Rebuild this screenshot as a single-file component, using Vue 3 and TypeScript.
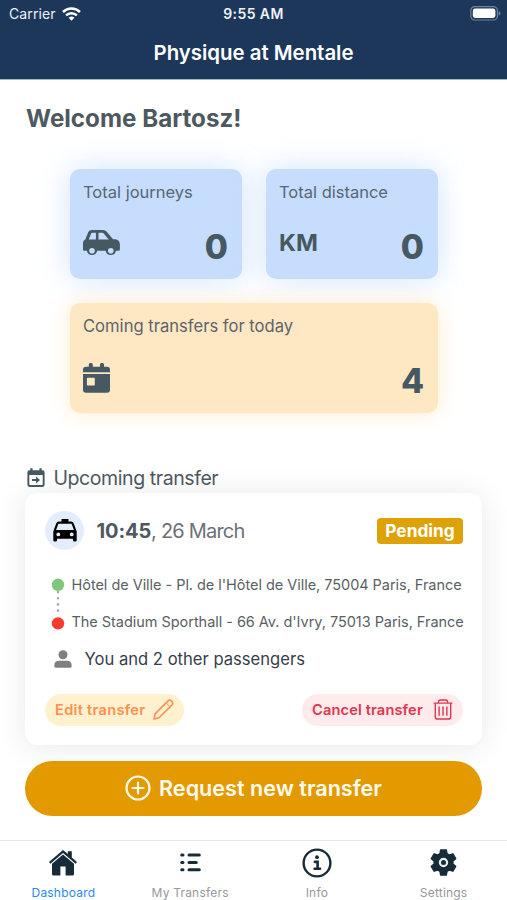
<script setup lang="ts">
interface Stat {
  label: string
  value: number
  kind: 'car' | 'km' | 'calendar'
}

interface Tab {
  label: string
  icon: 'home' | 'list' | 'info' | 'gear'
  active?: boolean
}

const stats: Stat[] = [
  { label: 'Total journeys', value: 0, kind: 'car' },
  { label: 'Total distance', value: 0, kind: 'km' },
  { label: 'Coming transfers for today', value: 4, kind: 'calendar' },
]

const tabs: Tab[] = [
  { label: 'Dashboard', icon: 'home', active: true },
  { label: 'My Transfers', icon: 'list' },
  { label: 'Info', icon: 'info' },
  { label: 'Settings', icon: 'gear' },
]
</script>

<template>
  <div class="screen">
    <header class="top">
      <div class="status">
        <div class="carrier">
          <span>Carrier</span>
          <svg width="19" height="14" viewBox="0 0 19 14" fill="none" stroke="#fff" stroke-width="2.5">
            <path d="M1 5a12.2 12.2 0 0 1 17 0" />
            <path d="M4.1 8.4a7.8 7.8 0 0 1 10.8 0" />
            <path d="M9.5 13.8L6.6 10.8a4.2 4.2 0 0 1 5.8 0z" fill="#fff" stroke="none" />
          </svg>
        </div>
        <div class="clock">9:55 AM</div>
        <div class="battery">
          <svg width="31" height="15" viewBox="0 0 31 15">
            <rect x=".8" y=".6" width="26.6" height="13.4" rx="4" fill="none" stroke="#6f809a" stroke-width="1.2" />
            <rect x="2.8" y="2.6" width="22.6" height="9.4" rx="2.4" fill="#fff" />
            <path d="M28.6 5.2q2 .6 2 2.2t-2 2.2z" fill="#6f809a" />
          </svg>
        </div>
      </div>
      <h1 class="title">Physique at Mentale</h1>
    </header>

    <main class="content">
      <h2 class="welcome">Welcome Bartosz!</h2>

      <section class="stats">
        <div v-for="s in stats" :key="s.label" class="stat" :class="s.kind">
          <div class="stat-label">{{ s.label }}</div>
          <div class="stat-row">
            <svg v-if="s.kind === 'car'" class="car-icon" width="37" height="27" viewBox="0 0 37 27">
              <path fill-rule="evenodd" fill="#465862" d="M8.8 0H20.2Q22.2 0 23.7 1.7L30 9.2H32Q36.9 9.6 36.9 14.5V19.4Q36.9 20.7 35.5 20.7H33A5.3 5.3 0 0 1 22.6 20.7H14.2A5.3 5.3 0 0 1 3.8 20.7H1.2Q0 20.7 0 19.4V13Q0 10.4 2.3 9.5L5.2 2.3Q6.2 0 8.8 0ZM8.3 3.3L5.7 9.5H12.9V2.8H9.1Q8.5 2.8 8.3 3.3ZM15.5 2.8V9.5H25.8L20.7 3.5Q20.1 2.8 19.3 2.8ZM9 17.9A2.8 2.8 0 1 0 9 23.5A2.8 2.8 0 1 0 9 17.9ZM27.8 17.9A2.8 2.8 0 1 0 27.8 23.5A2.8 2.8 0 1 0 27.8 17.9Z" />
            </svg>
            <span v-else-if="s.kind === 'km'" class="unit">KM</span>
            <svg v-else class="cal-icon" width="27" height="30" viewBox="0 0 27 30">
              <path fill-rule="evenodd" fill="#465862" d="M3 3.8H5.8V1.5Q5.8 0 7.3 0H8.3Q9.8 0 9.8 1.5V3.8H17V1.5Q17 0 18.5 0H19.5Q21 0 21 1.5V3.8H24Q27 3.8 27 6.8V9.2H0V6.8Q0 3.8 3 3.8ZM0 11H27V26.8Q27 29.8 24 29.8H3Q0 29.8 0 26.8ZM4.7 14.8Q3.9 14.8 3.9 15.6V21.8Q3.9 22.6 4.7 22.6H11Q11.8 22.6 11.8 21.8V15.6Q11.8 14.8 11 14.8Z" />
            </svg>
            <span class="stat-value">{{ s.value }}</span>
          </div>
        </div>
      </section>

      <div class="section-head">
        <svg width="18" height="20" viewBox="0 0 18 20">
          <path fill-rule="evenodd" fill="#465862" d="M2.5 2.2H3.3V.3H5.6V2.2H12.4V.3H14.7V2.2H15.5Q17.6 2.2 17.6 4.3V16.8Q17.6 18.9 15.5 18.9H2.5Q.4 18.9 .4 16.8V4.3Q.4 2.2 2.5 2.2ZM2.3 7V16.2Q2.3 17 3.1 17H14.9Q15.7 17 15.7 16.2V7Z" />
          <path fill="#465862" d="M5 10.9H9V8.6L13 12L9 15.4V13.1H5Z" />
        </svg>
        <span>Upcoming transfer</span>
      </div>

      <article class="card">
        <div class="card-head">
          <div class="avatar">
            <svg width="24" height="23" viewBox="0 0 24 23">
              <path fill-rule="evenodd" d="M8.5 0H15.5V2.6H18.3Q20.2 2.6 20.8 4.4L23.7 12.5V21.3Q23.7 22.6 22.4 22.6H21.3Q20 22.6 20 21.3V19.8H4V21.3Q4 22.6 2.7 22.6H1.6Q.3 22.6 .3 21.3V12.5L3.2 4.4Q3.8 2.6 5.7 2.6H8.5ZM5.4 4.7L3.1 11H20.9L18.6 4.7ZM5.3 13.5A1.9 1.9 0 1 0 5.3 17.3A1.9 1.9 0 1 0 5.3 13.5ZM18.7 13.5A1.9 1.9 0 1 0 18.7 17.3A1.9 1.9 0 1 0 18.7 13.5Z" />
            </svg>
          </div>
          <div class="when"><strong>10:45</strong>, 26 March</div>
          <span class="badge">Pending</span>
        </div>

        <div class="route">
          <svg class="track" width="14" height="52" viewBox="0 0 14 52">
            <path d="M7 14v24" stroke="#a9a9ad" stroke-width="2.6" stroke-linecap="round" stroke-dasharray=".1 6.1" />
            <circle cx="7" cy="6.8" r="6.2" fill="#80c67b" />
            <circle cx="7" cy="45.4" r="6.2" fill="#fa3a2c" />
          </svg>
          <div class="stops">
            <div class="from">Hôtel de Ville - Pl. de l'Hôtel de Ville, 75004 Paris, France</div>
            <div class="to">The Stadium Sporthall - 66 Av. d'Ivry, 75013 Paris, France</div>
          </div>
        </div>

        <div class="people">
          <svg width="18" height="18" viewBox="0 0 18 18" fill="#7f7f82">
            <circle cx="9" cy="4.7" r="4.5" />
            <path d="M.4 15.2Q.4 10.8 5.2 10.8H12.8Q17.6 10.8 17.6 15.2V16.2Q17.6 17.8 16 17.8H2Q.4 17.8 .4 16.2Z" />
          </svg>
          <span>You and 2 other passengers</span>
        </div>

        <div class="actions">
          <button class="pill edit">
            <span>Edit transfer</span>
            <svg width="21" height="21" viewBox="0 0 21 21" fill="none" stroke="#fb9150" stroke-width="1.6" stroke-linejoin="round">
              <path d="M1 20L2.1 14.9L14.8 2.1Q16.7.2 18.7 2.1Q20.7 4.1 18.8 6.1L6 18.8Z" />
              <path d="M13.1 3.8L17.1 7.8" stroke-width="1" />
            </svg>
          </button>
          <button class="pill cancel">
            <span>Cancel transfer</span>
            <svg width="20" height="21" viewBox="0 0 20 21" fill="none" stroke="#e13650" stroke-width="1.4">
              <path d="M.6 4.1H19.4M2.3 4.1V17.9Q2.3 20 4.4 20H15.6Q17.7 20 17.7 17.9V4.1M5.5 4V2.8Q5.5 1 7.3 1H12.7Q14.5 1 14.5 2.8V4M6.1 7.5V16.7M10 7.5V16.7M13.9 7.5V16.7" />
            </svg>
          </button>
        </div>
      </article>

      <button class="request">
        <svg width="26" height="26" viewBox="0 0 26 26" fill="none" stroke="#fff8e6" stroke-width="2.2" stroke-linecap="round">
          <circle cx="13" cy="13" r="11.5" />
          <path d="M13 7.5V18.5M7.5 13H18.5" />
        </svg>
        <span>Request new transfer</span>
      </button>
    </main>

    <nav class="tabs">
      <div v-for="t in tabs" :key="t.label" class="tab" :class="[t.icon, { active: t.active }]">
        <div class="tab-icon">
          <svg v-if="t.icon === 'home'" width="28" height="26" viewBox="0 0 28 26">
            <path fill="#172b38" d="M14 0L18.8 4.1V1.2H22.8V7.6L28 12.1L26.7 13.7L14 2.9L1.3 13.7L0 12.1Z" />
            <path fill="#172b38" d="M14 4.4L25 13.8V24Q25 25.6 23.4 25.6H16.6V16.6H11.4V25.6H4.6Q3 25.6 3 24V13.8Z" />
          </svg>
          <svg v-else-if="t.icon === 'list'" width="21" height="20" viewBox="0 0 21 20" stroke="#172b38" stroke-width="3" stroke-linecap="round">
            <path d="M1.7 2H3M9 2H19.3M1.7 9.4H3M9 9.4H16.3M1.7 16.8H3M9 16.8H19.3" />
          </svg>
          <svg v-else-if="t.icon === 'info'" width="30" height="30" viewBox="0 0 30 30" fill="none" stroke="#172b38" stroke-width="2.4">
            <circle cx="15" cy="15" r="13.4" />
            <circle cx="15" cy="9.2" r="1.9" fill="#172b38" stroke="none" />
            <path d="M12.9 13.9H15.6V20.6M12.6 20.8H18" stroke-width="2.6" stroke-linecap="round" />
          </svg>
          <svg v-else width="27" height="27" viewBox="0 0 27 27">
            <path fill="#172b38" stroke="#172b38" stroke-width="1.4" stroke-linejoin="round" d="M10.7 1H16.3L17 4.6L19.4 6L22.9 4.8L25.7 9.6L22.9 12V15L25.7 17.4L22.9 22.2L19.4 21L17 22.4L16.3 26H10.7L10 22.4L7.6 21L4.1 22.2L1.3 17.4L4.1 15V12L1.3 9.6L4.1 4.8L7.6 6L10 4.6Z" />
            <circle cx="13.5" cy="13.5" r="3.6" fill="#172b38" stroke="#e8eef2" stroke-width="2.2" />
          </svg>
        </div>
        <span class="tab-label">{{ t.label }}</span>
      </div>
    </nav>
  </div>
</template>

<style>
body {
  background: #fff;
}
</style>

<style scoped>
.screen {
  width: 507px;
  height: 900px;
  overflow: hidden;
  display: flex;
  flex-direction: column;
  font-family: Inter, "Liberation Sans", sans-serif;
  background: #fff;
  color: #4d585f;
  white-space: nowrap;
}

svg {
  display: block;
  flex: none;
}

.top {
  box-sizing: border-box;
  height: 80px;
  flex: none;
  background: #1d375a;
  color: #fff;
  border-bottom: 1px solid #9db5c5;
}

.status {
  display: grid;
  grid-template-columns: 1fr auto 1fr;
  align-items: center;
  height: 27px;
  padding: 0 7px 0 9px;
  font-size: 14px;
  color: #eef2f7;
}

.carrier {
  display: flex;
  align-items: center;
  gap: 6px;
  letter-spacing: .1px;
}

.clock {
  font-weight: 600;
  letter-spacing: .4px;
  margin-left: -2px;
}

.battery {
  display: flex;
  justify-content: flex-end;
  margin-right: -1px;
}

.title {
  margin: 0;
  text-align: center;
  font-size: 20.4px;
  line-height: 51px;
  font-weight: 600;
}

.content {
  flex: 1;
  padding: 0 25px;
}

.welcome {
  margin: 24px 0 0 1px;
  font-size: 24.2px;
  line-height: 30px;
  font-weight: 700;
}

.stats {
  display: grid;
  grid-template-columns: 172px 172px;
  grid-auto-rows: 110px;
  gap: 24px;
  margin: 35px 45px 0;
}

.stat {
  box-sizing: border-box;
  display: flex;
  flex-direction: column;
  justify-content: space-between;
  border-radius: 10px;
  padding: 12px 14px 12px 13px;
  background: #c6ddfd;
  box-shadow: 0 0 30px rgba(198, 221, 253, .8);
}

.stat.calendar {
  grid-column: span 2;
  background: #fee8c3;
  box-shadow: 0 0 20px rgba(254, 232, 195, .85);
}

.stat-label {
  font-size: 16.5px;
  line-height: 22px;
  color: #566775;
}

.calendar .stat-label {
  font-size: 16.6px;
  color: #5f6368;
}

.stat-row {
  display: flex;
  align-items: center;
  justify-content: space-between;
  height: 40px;
}

.car-icon,
.unit {
  margin-bottom: 8px;
}

.cal-icon {
  margin-bottom: 7px;
}

.unit {
  font-size: 23.5px;
  line-height: 30px;
  font-weight: 700;
  color: #465862;
}

.stat-value {
  font-size: 33.5px;
  line-height: 40px;
  font-weight: 800;
  color: #465862;
}

.section-head {
  display: flex;
  align-items: center;
  gap: 8.5px;
  height: 30px;
  margin: 49.5px 0 0 2px;
  font-size: 19.5px;
  letter-spacing: -.42px;
}

.card {
  box-sizing: border-box;
  height: 252px;
  padding: 18px 19px 0 20px;
  border-radius: 12px;
  background: #fff;
  box-shadow: 0 2px 30px rgba(40, 50, 60, .11);
}

.card-head {
  display: flex;
  align-items: center;
  height: 40px;
}

.avatar {
  display: flex;
  align-items: center;
  justify-content: center;
  width: 39px;
  height: 39px;
  border-radius: 50%;
  background: #e4edfb;
}

.when {
  margin-left: 12.5px;
  font-size: 20px;
  letter-spacing: -.8px;
  color: #6b7177;
}

.when strong {
  font-weight: 700;
  letter-spacing: -.1px;
  color: #4d585f;
}

.badge {
  margin-left: auto;
  width: 86px;
  text-align: center;
  border-radius: 4px;
  background: #dfa206;
  color: #fff;
  font-size: 17.3px;
  line-height: 26px;
  font-weight: 700;
}

.route {
  display: flex;
  gap: 6.5px;
  margin: 27.5px 0 0 6px;
}

.stops {
  display: flex;
  flex-direction: column;
  gap: 16px;
  font-size: 14.5px;
  line-height: 20.5px;
  letter-spacing: -.04px;
  color: #5a5f64;
  margin-top: -3px;
}

.people {
  display: flex;
  align-items: center;
  gap: 12.5px;
  height: 24px;
  margin: 14.5px 0 0 9px;
  font-size: 16.6px;
  color: #36414b;
}

.actions {
  display: flex;
  justify-content: space-between;
  margin-top: 23px;
}

.pill {
  display: flex;
  align-items: center;
  justify-content: space-between;
  height: 32px;
  border: 0;
  border-radius: 16px;
  padding: 0 10px;
  font-family: inherit;
  font-size: 14.6px;
  letter-spacing: .3px;
  font-weight: 600;
}

.edit {
  width: 139px;
  background: #fff0ce;
  color: #fb9150;
}

.cancel {
  width: 161px;
  letter-spacing: .15px;
  background: #ffeaec;
  color: #e13650;
}

.request {
  display: flex;
  align-items: center;
  justify-content: center;
  gap: 8px;
  width: 457px;
  height: 55px;
  margin-top: 16px;
  border: 0;
  border-radius: 28px;
  background: #e39a00;
  color: #fffaf0;
  font-family: inherit;
  font-size: 21.6px;
  font-weight: 600;
}

.tabs {
  box-sizing: border-box;
  display: grid;
  grid-template-columns: repeat(4, 1fr);
  height: 60px;
  flex: none;
  border-top: 1px solid #e6e8ea;
  background: #fff;
}

.tab {
  display: flex;
  flex-direction: column;
  align-items: center;
}

.tab-icon {
  display: flex;
  align-items: center;
  height: 43px;
}

.tab-label {
  font-size: 12px;
  line-height: 17px;
  letter-spacing: .2px;
  color: #97999c;
}

.active .tab-label {
  color: #2b8af2;
}
</style>
